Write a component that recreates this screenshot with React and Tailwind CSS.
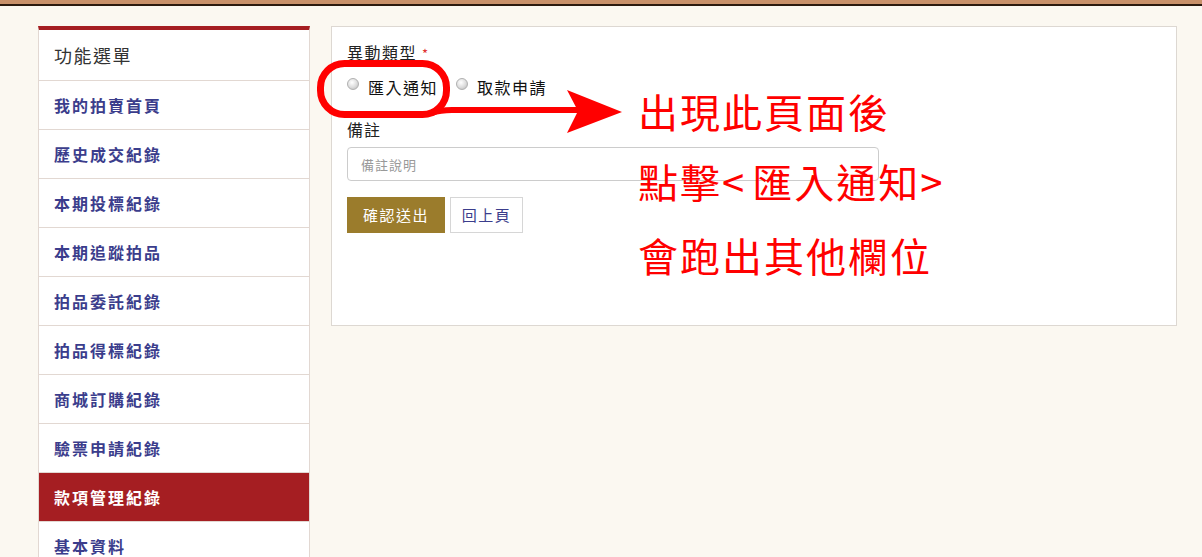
const menu = [
  "我的拍賣首頁",
  "歷史成交紀錄",
  "本期投標紀錄",
  "本期追蹤拍品",
  "拍品委託紀錄",
  "拍品得標紀錄",
  "商城訂購紀錄",
  "驗票申請紀錄",
  "款項管理紀錄",
  "基本資料",
];

function Radio({ label }) {
  return (
    <label className="flex items-center">
      <span className="w-[12px] h-[12px] rounded-full border border-[#b0b0b0] bg-[radial-gradient(circle_at_40%_35%,#ffffff,#dcdcdc_55%,#b5b5b5)] -mt-[6px]" />
      <span className="ml-[9px] tracking-[1.5px] text-[#111]">{label}</span>
    </label>
  );
}

export default function App() {
  return (
    <div className="relative min-h-screen bg-[#fbf8f1] font-['Noto_Sans_CJK_TC','Liberation_Sans',sans-serif] overflow-hidden">
      <div className="h-[4px] bg-[#c8916a]" />
      <div className="h-[2px] bg-[#2b1b0f]" />

      <div className="flex pl-[38px] pt-[20px] gap-[21px]">
        {/* side menu */}
        <div className="w-[272px] shrink-0 bg-white border-x border-[#e2d8d2] border-t-4 border-t-[#a51e22]">
          <div className="h-[50px] flex items-center pl-[15px] text-[18px] tracking-[1.5px] text-[#333]">
            功能選單
          </div>
          {menu.map((m) => {
            const active = m === "款項管理紀錄";
            return (
              <div
                key={m}
                className={
                  active
                    ? "h-[49px] border-t border-[#e2d8d2] bg-[#a51e22] text-white flex items-center pl-[15px] text-[16px] font-bold tracking-[2px]"
                    : "h-[49px] border-t border-[#e2d8d2] text-[#3b3d8c] flex items-center pl-[15px] text-[16px] font-bold tracking-[2px]"
                }
              >
                {m}
              </div>
            );
          })}
        </div>

        {/* form panel */}
        <div className="w-[846px] h-[300px] bg-white border border-[#ddd8d2] px-[15px] pt-[14px] text-[16px] text-[#222]">
          <div className="h-[22px] leading-[22px] tracking-[1.5px]">
            異動類型 <span className="text-[#e03030] text-[13px]">*</span>
          </div>
          <div className="mt-[13px] h-[22px] leading-[22px] flex gap-[18px]">
            <Radio label="匯入通知" />
            <Radio label="取款申請" />
          </div>
          <div className="mt-[20px] h-[22px] leading-[22px] tracking-[1px]">備註</div>
          <input
            className="mt-[7px] block w-[532px] h-[34px] rounded-[4px] border border-[#cccccc] px-[13px] text-[13px] tracking-[1px] placeholder:text-[#999] outline-none"
            placeholder="備註說明"
          />
          <div className="mt-[16px] flex gap-[5px]">
            <button className="w-[98px] h-[36px] bg-[#9b7c2c] text-white text-[15px] tracking-[1.5px]">
              確認送出
            </button>
            <button className="w-[73px] h-[36px] bg-white border border-[#d6d6d6] text-[#3b3d8c] text-[15px] tracking-[1.5px]">
              回上頁
            </button>
          </div>
        </div>
      </div>

      {/* annotation overlay */}
      <svg className="absolute inset-0 pointer-events-none" width="1202" height="557">
        <rect x="320.5" y="63.5" width="126" height="51" rx="24" fill="none" stroke="#ff0000" strokeWidth="7" />
        <path d="M432 113 Q440 110 452 110 L582 110" fill="none" stroke="#ff0000" strokeWidth="6" />
        <polygon points="567,90 622,112 567,133 578,111" fill="#ff0000" />
      </svg>
      <div className="absolute left-[638px] top-[91px] text-[40px] leading-[40px] tracking-[2px] text-[#ff0000]">
        出現此頁面後
      </div>
      <div className="absolute left-[638px] top-[161px] text-[40px] leading-[40px] tracking-[2px] text-[#ff0000]">
        點擊<span className="mr-[6px]">&lt;</span>匯入通知<span>&gt;</span>
      </div>
      <div className="absolute left-[638px] top-[235px] text-[40px] leading-[40px] tracking-[2px] text-[#ff0000]">
        會跑出其他欄位
      </div>
    </div>
  );
}
